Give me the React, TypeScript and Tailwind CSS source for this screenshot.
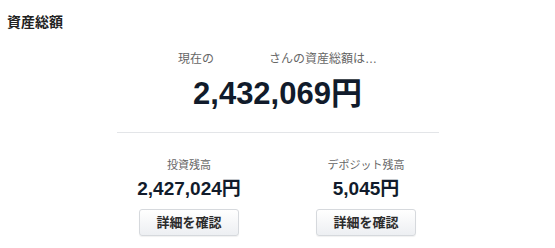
import React from 'react';

const font = { fontFamily: '"Liberation Sans", "Noto Sans CJK JP", sans-serif' };

type Balance = { label: string; amount: string };

const balances: Balance[] = [
  { label: '投資残高', amount: '2,427,024円' },
  { label: 'デポジット残高', amount: '5,045円' },
];

const BalanceColumn = ({ label, amount }: Balance) => (
  <div className="flex w-[177px] flex-col items-center">
    <div className="h-[16px] text-[11px] leading-[16px] text-[#666]">{label}</div>
    <div className="mt-[4px] h-[24px] text-[19px] font-bold leading-[24px] text-[#111b2b]">{amount}</div>
    <button className="mt-[8px] flex h-[27px] w-[100px] items-center justify-center rounded-[3px] border border-[#d6d9dd] bg-gradient-to-b from-white to-[#edeff2] text-[13px] font-bold text-[#2b2b2b] shadow-[0_1px_1px_rgba(0,0,0,0.06)]">
      詳細を確認
    </button>
  </div>
);

export default function App() {
  return (
    <div className="h-[248px] w-[555px] bg-white pl-[7px] pt-[12px]" style={font}>
      <h2 className="h-[20px] text-[14px] font-bold leading-[20px] text-[#222]">資産総額</h2>

      <div className="flex flex-col items-center pr-[7px]">
        <p className="mt-[18px] h-[18px] text-[12px] leading-[18px] text-[#666]">
          現在の<span className="inline-block w-[55px]" />さんの資産総額は…
        </p>
        <div className="mt-[6px] h-[40px] text-[31px] font-bold leading-[40px] text-[#111b2b]">2,432,069円</div>
        <div className="mt-[18px] h-px w-[322px] bg-[#e3e5e8]" />
        <div className="mt-[24px] flex">
          {balances.map((b) => (
            <BalanceColumn key={b.label} {...b} />
          ))}
        </div>
      </div>
    </div>
  );
}
